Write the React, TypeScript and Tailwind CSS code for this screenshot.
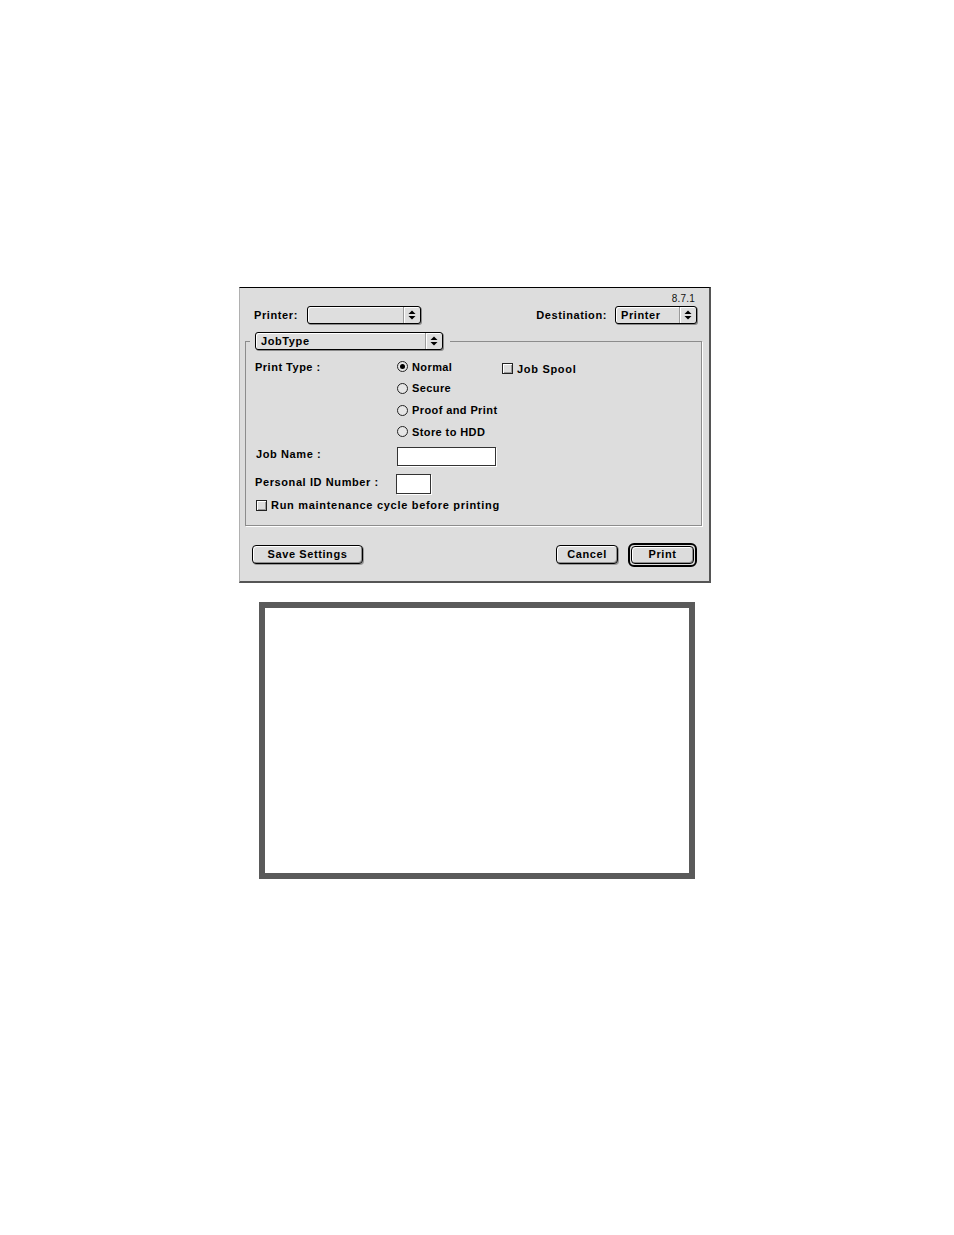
import React from 'react';

const font = { fontFamily: '"Liberation Sans", Arial, sans-serif' };

function Arrows() {
  return (
    <svg width="8" height="10" viewBox="0 0 8 10" className="block">
      <path d="M4 0.5 L7.5 4 L0.5 4 Z" fill="#000" />
      <path d="M0.5 6 L7.5 6 L4 9.5 Z" fill="#000" />
    </svg>
  );
}

function Popup({ label, width }: { label?: string; width: string }) {
  return (
    <div
      className={`${width} h-[18px] flex items-stretch rounded-[3px] border border-black bg-[#dedede] shadow-[1px_1px_0_#8a8a8a,inset_1px_1px_0_#fff]`}
    >
      <div className="flex-1 flex items-center pl-[5px] text-[11px] font-bold tracking-[0.6px] text-black">{label}</div>
      <div className="w-[17px] flex items-center justify-center border-l border-[#9a9a9a] shadow-[inset_1px_0_0_#fff]">
        <Arrows />
      </div>
    </div>
  );
}

function Radio({ label, checked }: { label: string; checked?: boolean }) {
  return (
    <div className="h-[21.7px] flex items-center gap-[4px]">
      <div className="w-[11px] h-[11px] rounded-full border border-[#222] bg-[#e6e6e6] flex items-center justify-center">
        {checked && <div className="w-[5px] h-[5px] rounded-full bg-black" />}
      </div>
      <span className="text-[11px] font-bold tracking-[0.4px] text-black">{label}</span>
    </div>
  );
}

function Checkbox({ label }: { label: string }) {
  return (
    <div className="flex items-center gap-[4px]">
      <div className="w-[11px] h-[11px] border border-[#222] bg-[#dcdcdc] shadow-[inset_1px_1px_0_#fff,inset_-1px_-1px_0_#9a9a9a]" />
      <span className="text-[11px] font-bold tracking-[0.7px] text-black">{label}</span>
    </div>
  );
}

function Button({ label, width }: { label: string; width: string }) {
  return (
    <div
      className={`${width} h-[19px] rounded-[4px] border border-black bg-[#dcdcdc] shadow-[inset_1px_1px_0_#fff,inset_-1px_-1px_0_#8f8f8f,1px_1px_0_#9a9a9a] flex items-center justify-center text-[11px] font-bold tracking-[0.6px] text-black`}
    >
      {label}
    </div>
  );
}

export default function App() {
  return (
    <div className="w-[954px] h-[1235px] bg-white" style={font}>
      <div className="pt-[287px] pl-[239px]">
        {/* print dialog */}
        <div className="w-[472px] h-[296px] bg-[#dddddd] border-t border-black border-l border-l-[#b0b0b0] border-r-2 border-r-[#555] border-b-2 border-b-[#555] flex flex-col">
          <div className="h-[16px] flex justify-end items-end pr-[14px] text-[10px] leading-[10px] tracking-[0.2px] text-[#111]">8.7.1</div>
          <div className="mt-[2px] h-[18px] flex items-center pl-[14px] pr-[12px]">
            <span className="w-[53px] text-[11px] font-bold tracking-[0.6px] text-black">Printer:</span>
            <Popup width="w-[114px]" />
            <div className="flex-1" />
            <span className="text-[11px] font-bold tracking-[0.6px] text-black mr-[8px]">Destination:</span>
            <Popup label="Printer" width="w-[82px]" />
          </div>

          <fieldset className="mt-[8px] ml-[5px] w-[457px] h-[194px] border border-[#8c8c8c] shadow-[1px_1px_0_#fff] p-0 m-0">
            <legend className="ml-[4px] pl-[5px] pr-[7px]">
              <Popup label="JobType" width="w-[188px]" />
            </legend>
            <div className="pl-[9px] pt-[6px] flex">
              <div className="w-[142px] h-[21.7px] flex items-center text-[11px] font-bold tracking-[0.5px] text-black">Print Type :</div>
              <div className="w-[105px] flex flex-col">
                <Radio label="Normal" checked />
                <Radio label="Secure" />
                <Radio label="Proof and Print" />
                <Radio label="Store to HDD" />
              </div>
              <div className="h-[21.7px] mt-[2px] flex items-center">
                <Checkbox label="Job Spool" />
              </div>
            </div>
            <div className="mt-[4px] pl-[10px] flex items-center h-[19px]">
              <span className="w-[141px] text-[11px] font-bold tracking-[0.6px] text-black -mt-[4px]">Job Name :</span>
              <div className="w-[99px] h-[19px] bg-white border border-[#333] shadow-[1px_1px_0_#fff]" />
            </div>
            <div className="mt-[8px] pl-[9px] flex items-center h-[20px]">
              <span className="w-[141px] text-[11px] font-bold tracking-[0.6px] text-black -mt-[4px]">Personal ID Number :</span>
              <div className="w-[35px] h-[20px] bg-white border border-[#333] shadow-[1px_1px_0_#fff]" />
            </div>
            <div className="mt-[3px] pl-[10px]">
              <Checkbox label="Run maintenance cycle before printing" />
            </div>
          </fieldset>

          <div className="mt-[17px] h-[23px] flex items-center pl-[12px] pr-[12px]">
            <Button label="Save Settings" width="w-[111px]" />
            <div className="flex-1" />
            <Button label="Cancel" width="w-[62px]" />
            <div className="ml-[10px] w-[69px] h-[24px] rounded-[6px] border-2 border-black p-[1px] flex">
              <div className="flex-1 rounded-[4px] border border-black bg-[#dcdcdc] shadow-[inset_1px_1px_0_#fff,inset_-1px_-1px_0_#8f8f8f] flex items-center justify-center text-[11px] font-bold tracking-[0.6px] text-black">
                Print
              </div>
            </div>
          </div>
        </div>
      </div>

      {/* empty framed panel */}
      <div className="mt-[19px] ml-[259px] w-[436px] h-[277px] border-[6px] border-[#5a5a5a] bg-white" />
    </div>
  );
}
